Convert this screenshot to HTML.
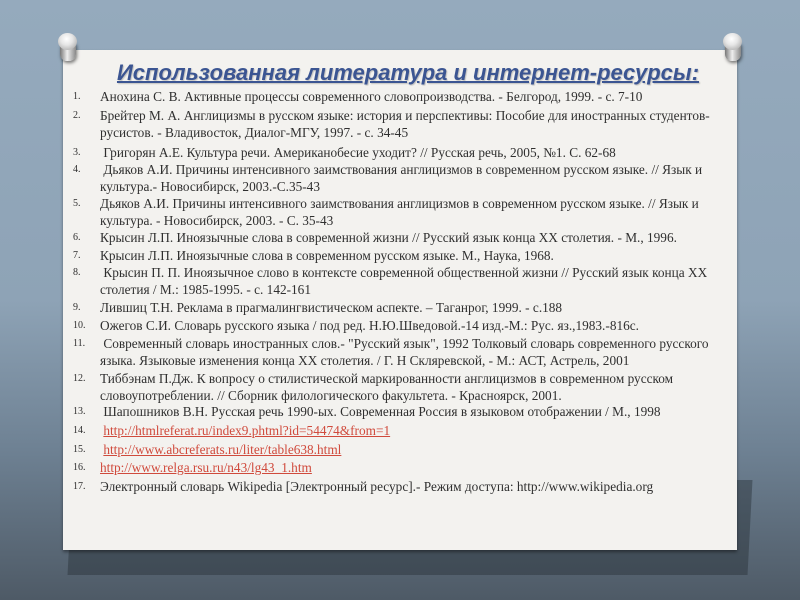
<!DOCTYPE html>
<html><head><meta charset="utf-8"><style>
body{margin:0;width:800px;height:600px;overflow:hidden;position:relative;
background:linear-gradient(180deg,#95aabd 0%,#8ea3b6 50%,#6e8193 75%,#4e5a66 100%);font-family:"Liberation Serif",serif;}
.shadow{position:absolute;left:70px;top:480px;width:680px;height:95px;background:rgba(40,48,56,.45);transform:skewX(-3deg);}
.paper{position:absolute;left:63px;top:50px;width:674px;height:500px;background:#f3f2ef;box-shadow:0 2px 3px rgba(0,0,0,.4);}
.title{position:absolute;left:0;width:690px;top:10px;text-align:center;font:italic bold 22px "Liberation Sans",sans-serif;color:#3b5592;text-decoration:underline;text-decoration-thickness:2px;text-shadow:1px 1px 1px rgba(0,0,0,.2)}
.it{position:absolute;left:37px;width:612px;font-size:13.3px;line-height:16.5px;color:#2f2f2f;}
.n{position:absolute;left:-27px;font-size:10px;}
a{color:#d04a3c;text-decoration:underline;}
.pin{position:absolute;width:22px;height:30px;}
.pin .h{position:absolute;left:1px;top:0;width:19px;height:17px;border-radius:50%;background:radial-gradient(circle at 45% 35%,#fff 0,#e6e6e6 40%,#999 100%);}
.pin .b{position:absolute;left:3px;top:9px;width:16px;height:19px;border-radius:3px 3px 7px 7px;background:linear-gradient(90deg,#777,#eee 45%,#888);box-shadow:1px 2px 3px rgba(0,0,0,.5)}
</style></head><body>
<div class="shadow"></div>
<div class="paper">
<div class="title">Использованная литература и интернет-ресурсы:</div>
<div class="it" style="top:39px"><span class="n">1.</span>Анохина С. В. Активные процессы современного словопроизводства. - Белгород, 1999. - с. 7-10</div>
<div class="it" style="top:58px"><span class="n">2.</span>Брейтер М. А. Англицизмы в русском языке: история и перспективы: Пособие для иностранных студентов-русистов. - Владивосток, Диалог-МГУ, 1997. - с. 34-45</div>
<div class="it" style="top:95px"><span class="n">3.</span>&nbsp;Григорян А.Е. Культура речи. Американобесие уходит? // Русская речь, 2005, №1. С. 62-68</div>
<div class="it" style="top:112px"><span class="n">4.</span>&nbsp;Дьяков А.И. Причины интенсивного заимствования англицизмов в современном русском языке. // Язык и культура.- Новосибирск, 2003.-С.35-43</div>
<div class="it" style="top:146px"><span class="n">5.</span>Дьяков А.И. Причины интенсивного заимствования англицизмов в современном русском языке. // Язык и культура. - Новосибирск, 2003. - С. 35-43</div>
<div class="it" style="top:180px"><span class="n">6.</span>Крысин Л.П. Иноязычные слова в современной жизни // Русский язык конца XX столетия. - М., 1996.</div>
<div class="it" style="top:198px"><span class="n">7.</span>Крысин Л.П. Иноязычные слова в современном русском языке. М., Наука, 1968.</div>
<div class="it" style="top:215px"><span class="n">8.</span>&nbsp;Крысин П. П. Иноязычное слово в контексте современной общественной жизни // Русский язык конца XX столетия / М.: 1985-1995. - с. 142-161</div>
<div class="it" style="top:250px"><span class="n">9.</span>Лившиц Т.Н. Реклама в прагмалингвистическом аспекте. – Таганрог, 1999. - с.188</div>
<div class="it" style="top:268px"><span class="n">10.</span>Ожегов С.И. Словарь русского языка / под ред. Н.Ю.Шведовой.-14 изд.-М.: Рус. яз.,1983.-816с.</div>
<div class="it" style="top:286px"><span class="n">11.</span>&nbsp;Современный словарь иностранных слов.- "Русский язык", 1992 Толковый словарь современного русского языка. Языковые изменения конца XX столетия. / Г. Н Скляревской, - М.: АСТ, Астрель, 2001</div>
<div class="it" style="top:321px"><span class="n">12.</span>Тиббэнам П.Дж. К вопросу о стилистической маркированности англицизмов в современном русском словоупотреблении. // Сборник филологического факультета. - Красноярск, 2001.</div>
<div class="it" style="top:354px"><span class="n">13.</span>&nbsp;Шапошников В.Н. Русская речь 1990-ых. Современная Россия в языковом отображении / М., 1998</div>
<div class="it" style="top:373px"><span class="n">14.</span>&nbsp;<a>http://htmlreferat.ru/index9.phtml?id=54474&amp;from=1</a></div>
<div class="it" style="top:392px"><span class="n">15.</span>&nbsp;<a>http://www.abcreferats.ru/liter/table638.html</a></div>
<div class="it" style="top:410px"><span class="n">16.</span><a>http://www.relga.rsu.ru/n43/lg43_1.htm</a></div>
<div class="it" style="top:429px"><span class="n">17.</span>Электронный словарь Wikipedia [Электронный ресурс].- Режим доступа: http://www.wikipedia.org</div>
</div>
<div class="pin" style="left:57px;top:33px"><div class="b"></div><div class="h"></div></div>
<div class="pin" style="left:722px;top:33px"><div class="b"></div><div class="h"></div></div>
</body></html>
